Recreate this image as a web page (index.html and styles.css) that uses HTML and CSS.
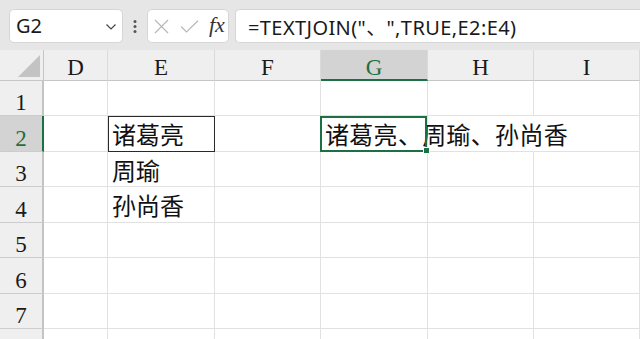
FILE: index.html
```html
<!DOCTYPE html>
<html lang="zh-CN">
<head>
<meta charset="utf-8">
<title>TEXTJOIN</title>
<link rel="stylesheet" href="styles.css">
</head>
<body>
<div class="app">
  <div class="fbar">
    <div class="namebox">
      <span class="ref">G2</span>
      <svg class="chev" width="10" height="6" viewBox="0 0 10 6"><path d="M0.5 0.5 L5 5 L9.5 0.5" fill="none" stroke="#444" stroke-width="1.2"/></svg>
    </div>
    <div class="grip">
      <svg width="4" height="13" viewBox="0 0 4 13"><circle cx="2" cy="1.6" r="1.5" fill="#555"/><circle cx="2" cy="6.5" r="1.5" fill="#555"/><circle cx="2" cy="11.4" r="1.5" fill="#555"/></svg>
    </div>
    <div class="fxbox">
      <svg class="ico-x" width="15" height="15" viewBox="0 0 15 15"><path d="M1 1 L14 14 M14 1 L1 14" stroke="#b8b8b8" stroke-width="1.2" fill="none"/></svg>
      <svg class="ico-ok" width="19" height="13" viewBox="0 0 19 13"><path d="M1 6.5 L6.5 12 L18 0.8" stroke="#b8b8b8" stroke-width="1.2" fill="none"/></svg>
      <span class="fx">fx</span>
    </div>
    <div class="formula">=TEXTJOIN("、",TRUE,E2:E4)</div>
  </div>

  <div class="sheet">
    <div class="corner"><span class="tri"></span></div>
    <div class="ch">D</div>
    <div class="ch">E</div>
    <div class="ch">F</div>
    <div class="ch sel">G</div>
    <div class="ch">H</div>
    <div class="ch">I</div>

    <div class="rh">1</div>
    <div class="c"></div><div class="c"></div><div class="c"></div><div class="c"></div><div class="c"></div><div class="c"></div>

    <div class="rh sel">2</div>
    <div class="c"></div>
    <div class="c boxed">诸葛亮</div>
    <div class="c"></div>
    <div class="c active">诸葛亮、周瑜、孙尚香</div>
    <div class="c no-r"></div>
    <div class="c"></div>

    <div class="rh">3</div>
    <div class="c"></div><div class="c">周瑜</div><div class="c"></div><div class="c"></div><div class="c"></div><div class="c"></div>

    <div class="rh">4</div>
    <div class="c"></div><div class="c">孙尚香</div><div class="c"></div><div class="c"></div><div class="c"></div><div class="c"></div>

    <div class="rh">5</div>
    <div class="c"></div><div class="c"></div><div class="c"></div><div class="c"></div><div class="c"></div><div class="c"></div>

    <div class="rh">6</div>
    <div class="c"></div><div class="c"></div><div class="c"></div><div class="c"></div><div class="c"></div><div class="c"></div>

    <div class="rh">7</div>
    <div class="c"></div><div class="c"></div><div class="c"></div><div class="c"></div><div class="c"></div><div class="c"></div>

    <div class="rh"></div>
    <div class="c"></div><div class="c"></div><div class="c"></div><div class="c"></div><div class="c"></div><div class="c"></div>
  </div>
</div>
</body>
</html>
```

FILE: styles.css
```css
html, body {
  margin: 0;
  padding: 0;
  background: #ffffff;
  overflow: hidden;
}

.app {
  width: 640px;
  height: 339px;
  overflow: hidden;
  font-family: "Noto Sans", "Noto Sans CJK SC", sans-serif;
}

/* formula bar */
.fbar {
  height: 50px;
  box-sizing: border-box;
  background: #e6e6e6;
  display: flex;
  align-items: stretch;
  padding: 9px 0 7px 9px;
}

.namebox {
  width: 114px;
  box-sizing: border-box;
  background: #fff;
  border: 1px solid #d6d6d6;
  border-radius: 5px;
  display: flex;
  align-items: center;
  justify-content: space-between;
  padding: 0 6px 0 6px;
}

.ref {
  font-size: 20px;
  color: #1a1a1a;
  line-height: 1;
}

.chev {
  margin-top: 1px;
}

.grip {
  width: 24px;
  display: flex;
  align-items: center;
  justify-content: center;
}

.fxbox {
  width: 82px;
  box-sizing: border-box;
  background: #fff;
  border: 1px solid #d6d6d6;
  border-radius: 5px;
  display: flex;
  align-items: center;
  padding-left: 6px;
}

.ico-x {
  margin-right: 11px;
}

.ico-ok {
  margin-right: 10px;
}

.fx {
  font-family: "Liberation Serif", "DejaVu Serif", serif;
  font-style: italic;
  font-size: 22px;
  color: #333;
  line-height: 1;
  margin-top: -2px;
}

.formula {
  flex: 1;
  margin-left: 6px;
  background: #fff;
  border: 1px solid #d6d6d6;
  border-right: none;
  border-radius: 5px 0 0 5px;
  display: flex;
  align-items: center;
  padding-left: 12px;
  font-size: 20px;
  letter-spacing: 0.4px;
  color: #1a1a1a;
  white-space: nowrap;
}

/* sheet */
.sheet {
  display: grid;
  grid-template-columns: 44px 64px 107px 106px 107px 106px 106px;
  grid-template-rows: 31px 35px 36px 35px 36px 35px 36px 35px 36px;
  background: #fff;
}

.corner {
  background: #efefef;
  border-right: 1px solid #c6c6c6;
  border-bottom: 1px solid #c6c6c6;
  position: relative;
}

.tri {
  position: absolute;
  right: 3px;
  bottom: 3px;
  width: 22px;
  height: 22px;
  background: #c3c3c3;
  clip-path: polygon(100% 0, 100% 100%, 0 100%);
}

.ch, .rh {
  background: #efefef;
  font-family: "Liberation Serif", "Times New Roman", serif;
  font-size: 23px;
  color: #1a1a1a;
  display: flex;
  align-items: center;
  justify-content: center;
  box-sizing: border-box;
}

.ch {
  border-right: 1px solid #dadada;
  border-bottom: 1px solid #c6c6c6;
  padding-top: 6px;
}

.ch.sel {
  background: #d3d3d3;
  color: #1d6f42;
  border-bottom: 2px solid #1d7044;
  padding-top: 7px;
}

.rh {
  border-right: 2px solid #c4c4c4;
  border-bottom: 1px solid #cccccc;
  padding-top: 10px;
}

.rh.sel {
  background: #d3d3d3;
  color: #1d6f42;
  border-right-color: #1d7044;
}

.c {
  border-right: 1px solid #e1e1e1;
  border-bottom: 1px solid #e1e1e1;
  box-sizing: border-box;
  font-family: "Noto Sans CJK SC", "Noto Sans", sans-serif;
  font-size: 24px;
  color: #111;
  display: flex;
  align-items: center;
  padding-left: 4px;
  white-space: nowrap;
  min-width: 0;
}

.c.boxed {
  border-right-color: #2a2a2a;
  border-bottom-color: #2a2a2a;
  box-shadow: inset 1px 1px 0 0 #2a2a2a;
}

.c.no-r {
  border-right-color: transparent;
}

.c.active {
  position: relative;
  overflow: visible;
  letter-spacing: 0.3px;
}

.c.active::after {
  content: "";
  position: absolute;
  top: 0;
  left: -1px;
  right: 0;
  bottom: -1px;
  border: 2px solid #1d7044;
  pointer-events: none;
}

.c.active::before {
  content: "";
  position: absolute;
  right: -3px;
  bottom: -3px;
  width: 5px;
  height: 5px;
  background: #1d7044;
  border: 1px solid #fff;
  z-index: 2;
}
```
